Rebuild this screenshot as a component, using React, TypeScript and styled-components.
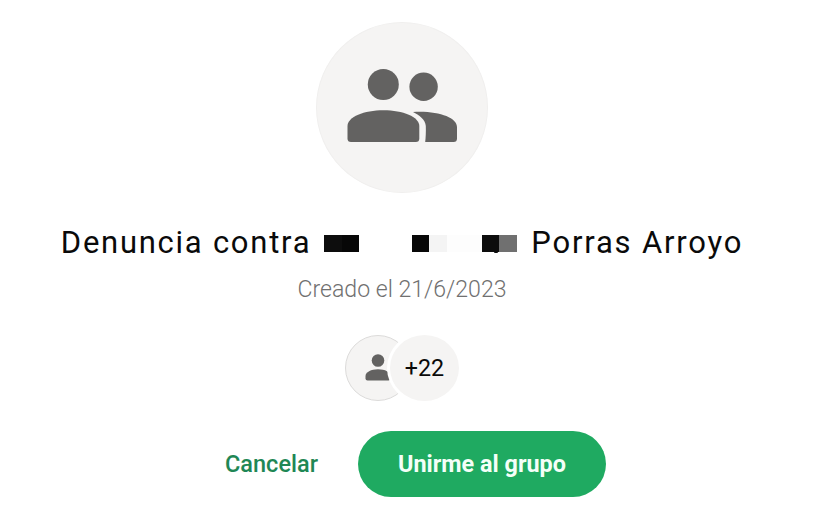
import React, { ReactElement } from 'react';
import styled, { createGlobalStyle } from 'styled-components';

interface BlockProps {
  $width: number;
  $color: string;
}

const hiddenName = [
  { width: 18, color: '#0d0d0d' },
  { width: 17, color: '#070707' },
  { width: 53, color: 'transparent' },
  { width: 17, color: '#080808' },
  { width: 18, color: '#f4f4f4' },
  { width: 35, color: '#fdfdfd' },
  { width: 17, color: '#0d0d0d' },
  { width: 18, color: '#707070' },
];

function GroupIcon(): ReactElement {
  return (
    <svg width="110" height="74" viewBox="347 68 110 74" fill="#636261">
      <circle cx="383.3" cy="84.5" r="15.5" />
      <circle cx="423.6" cy="86.7" r="14.2" />
      <path d="M347.5 126C347.5 117 364 110.3 383.5 110.3S419.3 117 419.3 126V138.5Q419.3 142 415.8 142H351Q347.5 142 347.5 138.5Z" />
      <path d="M413 112C438 110.5 457 117.5 457 127V138.5Q457 142 453.5 142H425.2C425.7 138 426 132 425.8 126C425.5 119.5 419 115 413 112Z" />
    </svg>
  );
}

function PersonIcon(): ReactElement {
  return (
    <svg width="26" height="27" viewBox="0 0 26 27" fill="#636261">
      <circle cx="13" cy="6.5" r="6.3" />
      <path d="M.5 22C.5 18 6 15.2 13 15.2S25.5 18 25.5 22V24.5Q25.5 26.5 23.5 26.5H2.5Q.5 26.5 .5 24.5Z" />
    </svg>
  );
}

function App(): ReactElement {
  return (
    <>
      <GlobalStyle />
      <Invite>
        <GroupPhoto>
          <GroupIcon />
        </GroupPhoto>
        <Title>
          <FirstWords>Denuncia contra</FirstWords>
          <HiddenName>
            {hiddenName.map((block, i) => (
              <Block key={i} $width={block.width} $color={block.color} />
            ))}
            <Speck />
          </HiddenName>
          <span>Porras Arroyo</span>
        </Title>
        <Created>Creado el 21/6/2023</Created>
        <Members>
          <Member>
            <PersonIcon />
          </Member>
          <MoreMembers>+22</MoreMembers>
        </Members>
        <Actions>
          <CancelButton type="button">Cancelar</CancelButton>
          <JoinButton type="button">Unirme al grupo</JoinButton>
        </Actions>
      </Invite>
    </>
  );
}

export default App;

const GlobalStyle = createGlobalStyle`
  body {
    margin: 0;
    background: #ffffff;
    font-family: Roboto, sans-serif;
  }
`;

const Invite = styled.main`
  box-sizing: border-box;
  width: 804px;
  height: 524px;
  padding-top: 22px;
  display: flex;
  flex-direction: column;
  align-items: center;
  overflow: hidden;
`;

const GroupPhoto = styled.div`
  box-sizing: border-box;
  width: 172px;
  height: 171px;
  padding-top: 45px;
  border: 1px solid #f0efee;
  border-radius: 50%;
  background: #f5f4f3;
  display: flex;
  justify-content: center;
  align-items: flex-start;
`;

const Title = styled.h1`
  margin: 29px 0 0;
  height: 42px;
  display: flex;
  align-items: center;
  color: #0a0a0a;
  font-size: 31px;
  font-weight: 400;
  line-height: 42px;
  letter-spacing: 1.8px;
  white-space: nowrap;
`;

const FirstWords = styled.span`
  letter-spacing: 1.74px;
`;

const HiddenName = styled.span`
  position: relative;
  display: flex;
  height: 17px;
  margin: 0 14px 0 13px;
`;

const Block = styled.span<BlockProps>`
  width: ${({ $width }) => $width}px;
  background: ${({ $color }) => $color};
`;

// the bit of a letter that shows below the blocks
const Speck = styled.span`
  position: absolute;
  right: 19px;
  bottom: -1px;
  width: 4px;
  height: 2px;
  border-radius: 1px;
  background: #0d0d0d;
`;

const Created = styled.p`
  margin: 10px 0 0;
  color: #707070;
  font-size: 23.1px;
  font-weight: 300;
  line-height: 32px;
`;

const Members = styled.div`
  display: flex;
  margin-top: 26px;
  margin-left: 2px;
`;

const Member = styled.div`
  box-sizing: border-box;
  width: 66px;
  height: 66px;
  margin-top: 3px;
  border: 1px solid #dcdbda;
  border-radius: 50%;
  background: #f5f4f3;
  display: flex;
  justify-content: center;
  padding-top: 18px;
`;

const MoreMembers = styled.div`
  width: 69px;
  height: 66px;
  margin-left: -24px;
  border: 3px solid #ffffff;
  border-radius: 50%;
  background: #f5f4f3;
  color: #0a0a0a;
  font-size: 23.3px;
  line-height: 67px;
  text-align: center;
  text-indent: 1px;
`;

const Actions = styled.div`
  display: flex;
  align-items: center;
  margin-top: 27px;
  margin-left: 27px;
  gap: 40px;
`;

const CancelButton = styled.button`
  height: 66px;
  padding: 0;
  border: 0;
  background: none;
  color: #1f8755;
  font-family: inherit;
  font-size: 23.5px;
  font-weight: 500;
  line-height: 66px;
`;

const JoinButton = styled(CancelButton)`
  width: 248px;
  border-radius: 33px;
  background: #1faa61;
  color: #f4fff8;
  font-size: 23.4px;
  font-weight: 700;
`;
